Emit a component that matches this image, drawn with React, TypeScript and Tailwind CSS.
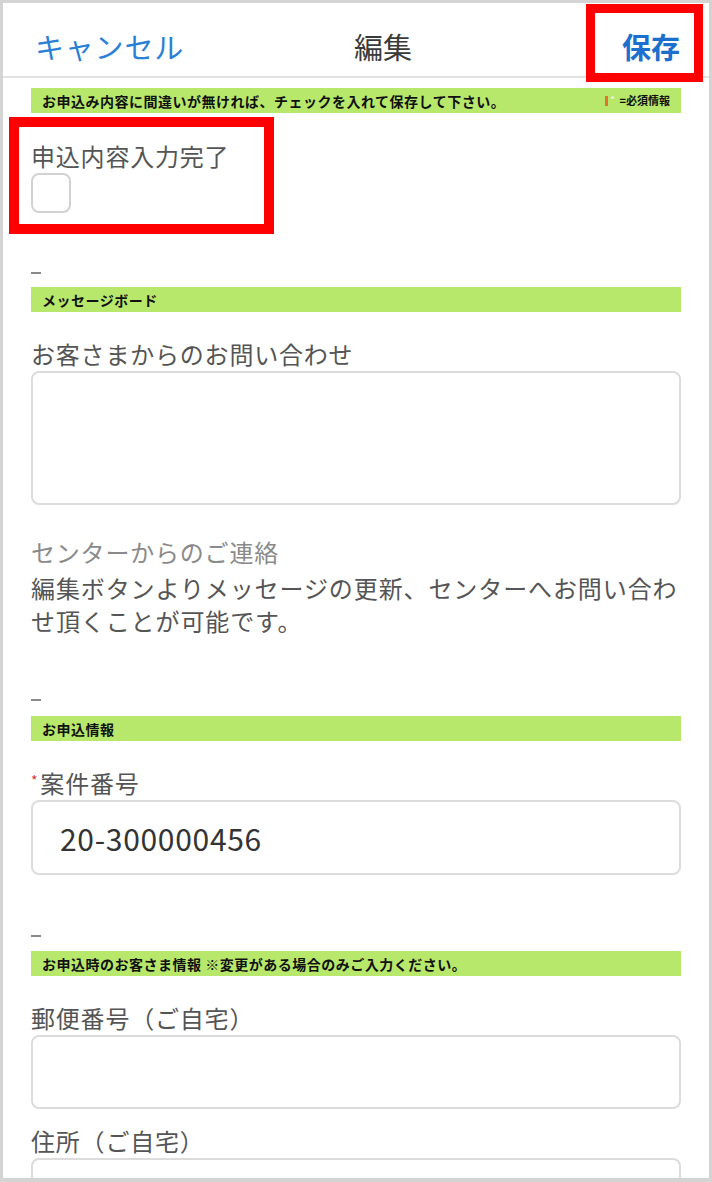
import React from "react";

const JP = { fontFamily: '"Noto Sans CJK JP", "Noto Sans", sans-serif' };

function Banner({ children, right }: { children: React.ReactNode; right?: React.ReactNode }) {
  return (
    <div className="flex h-[25px] items-center justify-between bg-[#b7e86b] pl-[11px] pr-[11px]">
      <span className="text-[14px] font-bold leading-none tracking-[0.5px] text-[#111]">{children}</span>
      {right}
    </div>
  );
}

function Dash() {
  return <div className="h-[2px] w-[10px] bg-[#8a8a8a]" />;
}

function Label({ children, className = "" }: { children: React.ReactNode; className?: string }) {
  return (
    <div className={`h-[30px] text-[24px] leading-[30px] tracking-[0.8px] text-[#555] ${className}`}>
      {children}
    </div>
  );
}

function Field({ h, children }: { h: string; children?: React.ReactNode }) {
  return (
    <div className={`mt-[2px] flex items-center rounded-[8px] border-2 border-[#dcdcdc] bg-white ${h}`}>
      {children}
    </div>
  );
}

export default function App() {
  return (
    <div
      className="relative h-[1182px] w-[712px] overflow-hidden border-[3px] border-b-[4px] border-[#d4d4d4] bg-white"
      style={JP}
    >
      {/* header */}
      <div className="flex h-[73px] items-center justify-between pl-[32px] pr-[29px] pt-[14px]">
        <span className="text-[29px] leading-none tracking-[0.8px] text-[#2a80d6]">キャンセル</span>
        <span className="-ml-[40px] text-[29px] leading-none text-[#3a3a3a]">編集</span>
        <span className="text-[29px] font-bold leading-none text-[#1c6fcc]">保存</span>
      </div>
      <div className="h-[2px] bg-[#e2e2e2]" />

      <div className="px-[28px]">
        <div className="mt-[10px]">
          <Banner
            right={
              <span className="flex items-center text-[11px] font-bold leading-none text-[#111]">
                <span className="h-[10px] w-[3px] bg-[#e2742e]" />
                <span className="ml-[2px] -mt-[4px] text-[8px] text-[#f4f4f4]">*</span>
                <span className="ml-[5px]">=必須情報</span>
              </span>
            }
          >
            お申込み内容に間違いが無ければ、チェックを入れて保存して下さい。
          </Banner>
        </div>

        <Label className="mt-[28px]">申込内容入力完了</Label>
        <div className="mt-[2px] h-[40px] w-[40px] rounded-[8px] border-2 border-[#d2d2d2]" />

        <div className="mt-[59px]">
          <Dash />
        </div>
        <div className="mt-[13px]">
          <Banner>メッセージボード</Banner>
        </div>

        <Label className="mt-[27px]">お客さまからのお問い合わせ</Label>
        <Field h="h-[134px]" />

        <div className="mt-[32px] h-[30px] text-[24px] leading-[30px] tracking-[0.8px] text-[#8a8a8a]">
          センターからのご連絡
        </div>
        <p className="mt-[4px] text-[24px] leading-[33px] tracking-[0.9px] text-[#555]">
          編集ボタンよりメッセージの更新、センターへお問い合わせ頂くことが可能です。
        </p>

        <div className="mt-[62px]">
          <Dash />
        </div>
        <div className="mt-[15px]">
          <Banner>お申込情報</Banner>
        </div>

        <Label className="mt-[27px]">
          <span className="mr-[2px] align-top text-[14px] leading-[24px] text-[#d33]">*</span>
          案件番号
        </Label>
        <Field h="h-[75px]">
          <span className="pl-[27px] text-[30px] leading-none tracking-[0.7px] text-[#333]">20-300000456</span>
        </Field>

        <div className="mt-[60px]">
          <Dash />
        </div>
        <div className="mt-[14px]">
          <Banner>お申込時のお客さま情報 ※変更がある場合のみご入力ください。</Banner>
        </div>

        <Label className="mt-[27px]">郵便番号（ご自宅）</Label>
        <Field h="h-[74px]" />

        <Label className="mt-[17px]">住所（ご自宅）</Label>
        <Field h="h-[74px]" />
      </div>

      {/* annotation boxes */}
      <div className="absolute left-[583px] top-[1px] h-[78px] w-[117px] border-[9px] border-[#ff0000]" />
      <div className="absolute left-[6px] top-[114px] h-[117px] w-[265px] border-[10px] border-[#ff0000]" />
    </div>
  );
}
